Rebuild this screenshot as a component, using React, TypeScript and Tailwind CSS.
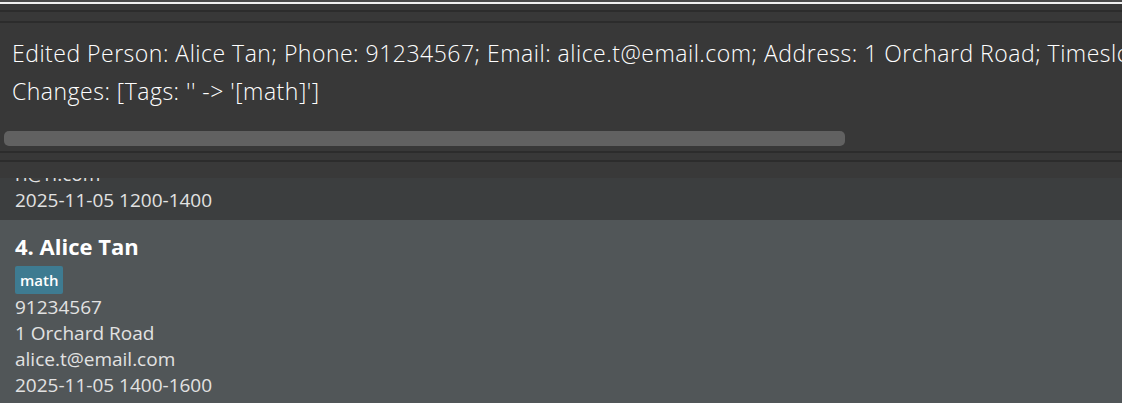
export default function App() {
  return (
    <div className="w-[1122px] h-[403px] overflow-hidden bg-[#383838] flex flex-col font-['Open_Sans',sans-serif]">
      <div className="h-[2px] shrink-0 bg-[#4a4a4a]" />
      <div className="h-[2px] shrink-0 bg-[#f0f0f0]" />
      <div className="h-[6px] shrink-0" />
      <div className="h-[2px] shrink-0 bg-[#2c2c2c]" />
      <div className="h-[9px] shrink-0" />
      <div className="h-[2px] shrink-0 bg-[#2c2c2c]" />

      {/* result display */}
      <div className="h-[128px] shrink-0 flex flex-col">
        <div className="pl-[12px] pt-[11px] text-[23px] leading-[38px] tracking-[0.5px] font-light text-white whitespace-nowrap overflow-hidden">
          <div>Edited Person: Alice Tan; Phone: 91234567; Email: alice.t@email.com; Address: 1 Orchard Road; Timeslot: 2025-11-05 1400-1600</div>
          <div>Changes: [Tags: '' -&gt; '[math]']</div>
        </div>
        <div className="mt-auto mb-[5px] ml-[4px] h-[15px] w-[841px] rounded-[5px] bg-[#616161]" />
      </div>

      <div className="h-[2px] shrink-0 bg-[#2c2c2c]" />
      <div className="h-[7px] shrink-0" />
      <div className="h-[2px] shrink-0 bg-[#2c2c2c]" />

      {/* person list */}
      <div className="flex-1 flex flex-col bg-[#393939] pt-[16px] overflow-hidden">
        <div className="h-[42px] shrink-0 bg-[#3c3e3f] relative overflow-hidden text-[19px] text-[#e2e2e2]">
          <div className="absolute left-[15px] top-[-17px] leading-[26px]">ri@ri.com</div>
          <div className="absolute left-[15px] top-[9px] leading-[26px]">2025-11-05 1200-1400</div>
        </div>
        <div className="flex-1 bg-[#515658] pl-[15px] pt-[12px] text-[19px] leading-[26px] text-[#e2e2e2]">
          <div className="text-[22px] font-bold leading-[28px] text-white">4. Alice Tan</div>
          <div className="mt-[6px] inline-flex h-[28px] items-center rounded-[2px] bg-[#3e7b91] px-[5px] text-[15px] font-semibold text-white">math</div>
          <div>91234567</div>
          <div>1 Orchard Road</div>
          <div>alice.t@email.com</div>
          <div>2025-11-05 1400-1600</div>
        </div>
      </div>
    </div>
  );
}
